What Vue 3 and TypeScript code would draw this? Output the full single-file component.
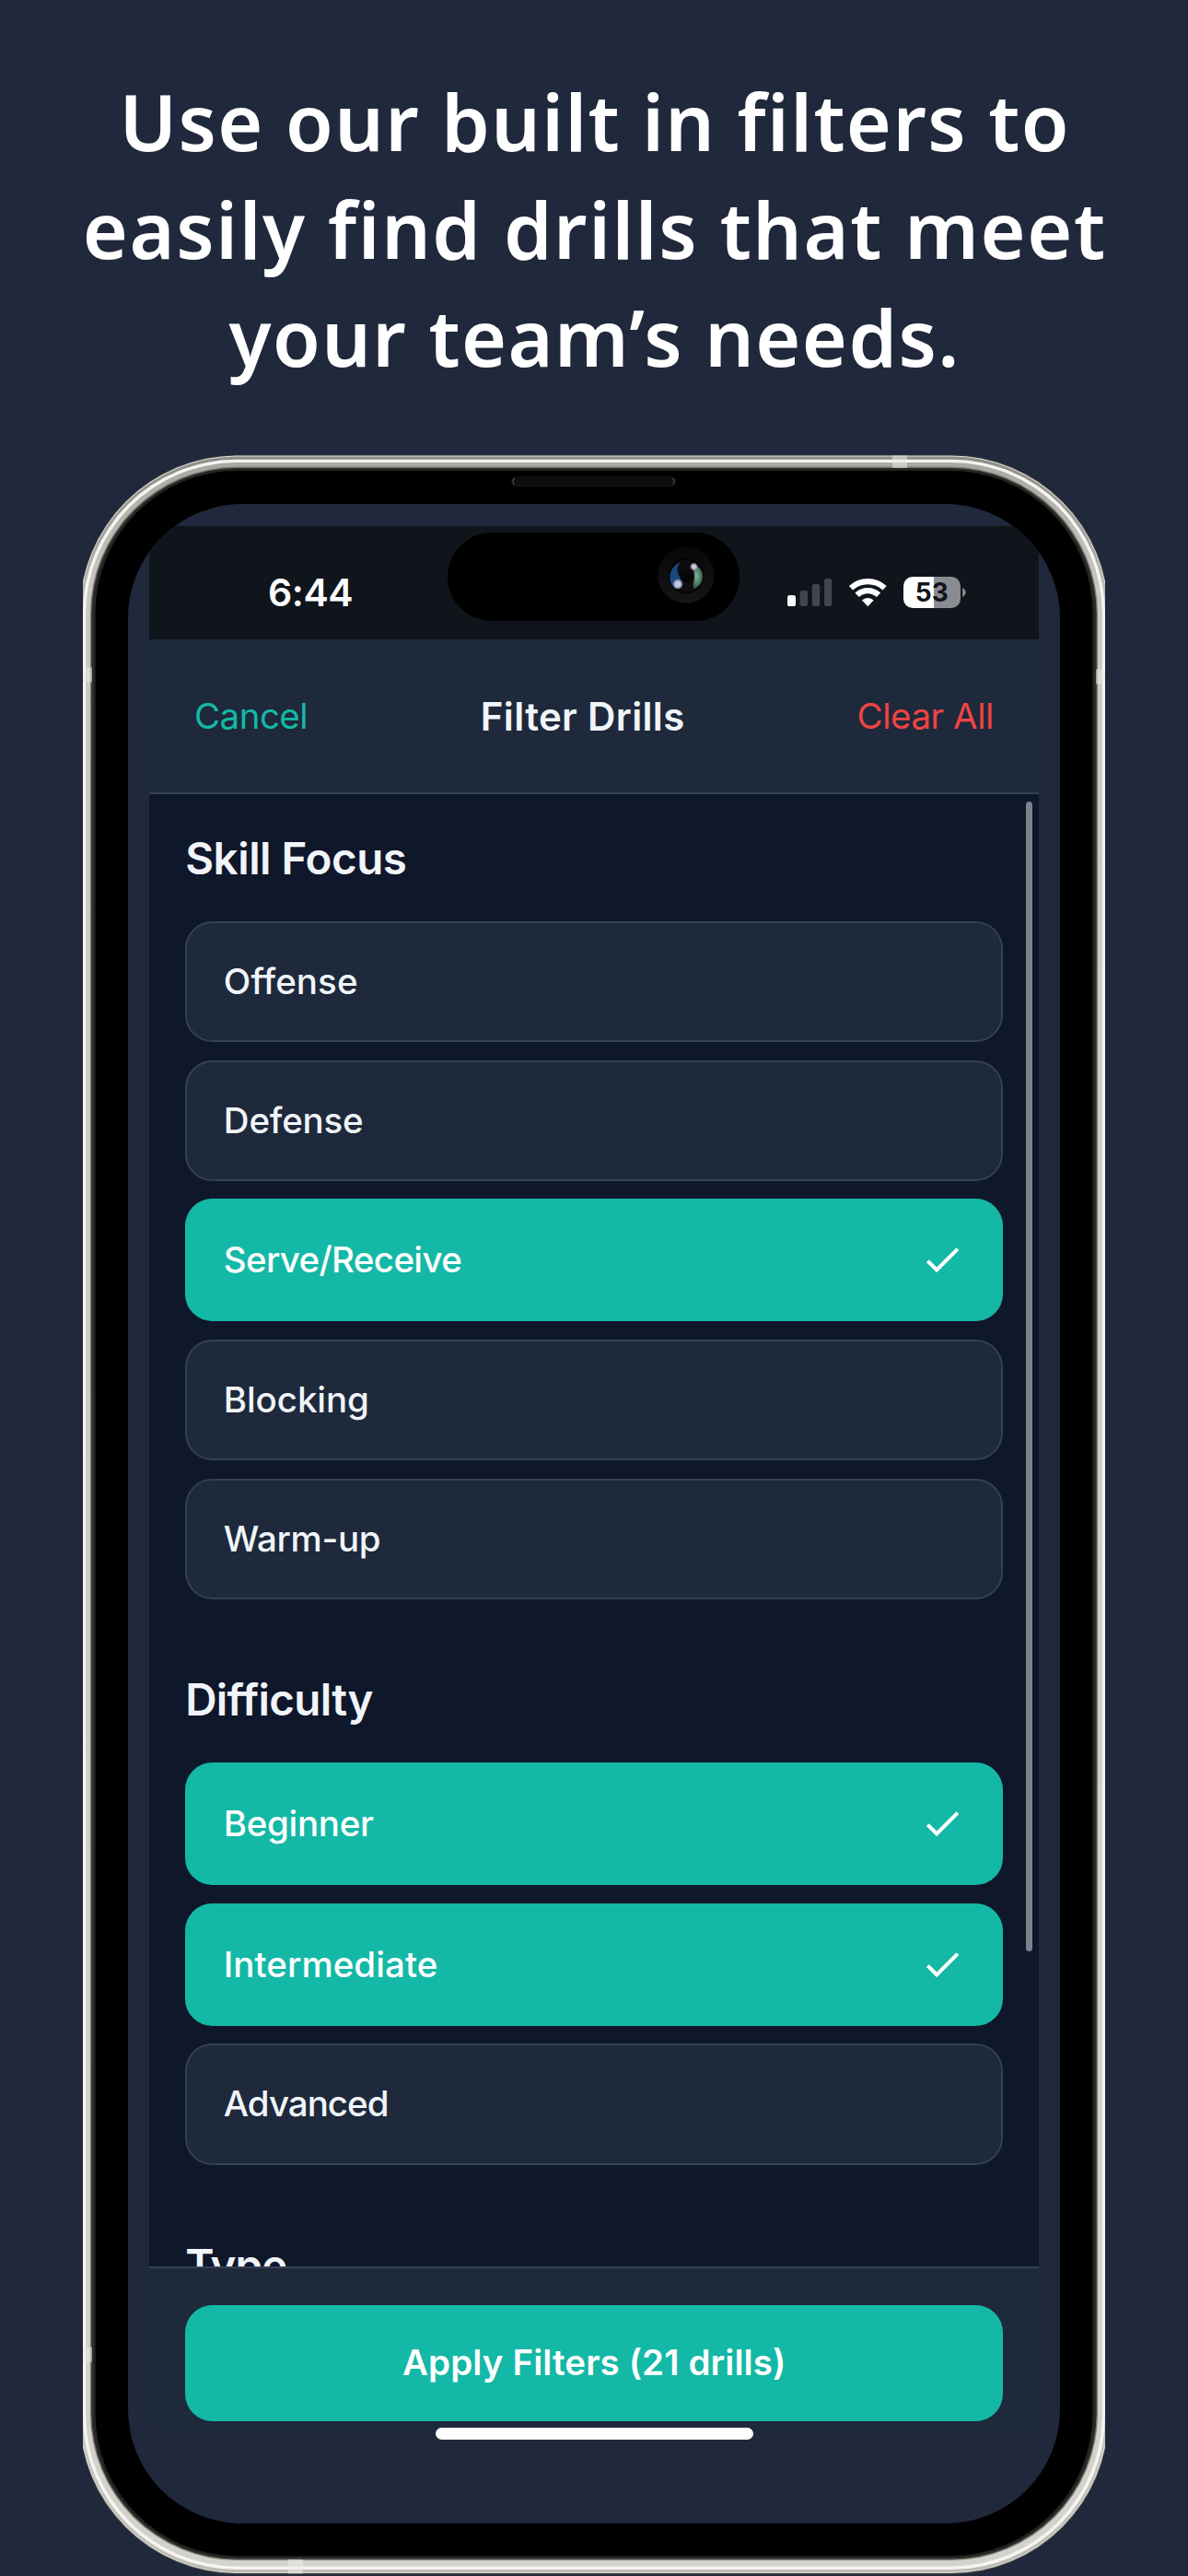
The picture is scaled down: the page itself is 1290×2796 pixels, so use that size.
<script setup lang="ts">
interface Option {
  label: string
  width: number
  selected?: boolean
}

interface Section {
  title: string
  width: number
  options: Option[]
}

const UI = '"Inter"'
const DISPLAY = '"Noto Sans"'

const headline = [
  { text: 'Use our built in filters to', width: 1020.5 },
  { text: 'easily find drills that meet', width: 1104.5 },
  { text: 'your team’s needs.', width: 789 },
]

const sections: Section[] = [
  {
    title: 'Skill Focus',
    width: 237.7,
    options: [
      { label: 'Offense', width: 142.2 },
      { label: 'Defense', width: 147.4 },
      { label: 'Serve/Receive', width: 256.5, selected: true },
      { label: 'Blocking', width: 153.3 },
      { label: 'Warm-up', width: 169 },
    ],
  },
  {
    title: 'Difficulty',
    width: 201.3,
    options: [
      { label: 'Beginner', width: 160.3, selected: true },
      { label: 'Intermediate', width: 228, selected: true },
      { label: 'Advanced', width: 178 },
    ],
  },
  { title: 'Type', width: 109, options: [] },
]

const ctx = document.createElement('canvas').getContext('2d')!

// Letter-spacing that makes a label span the given ink width.
function fit(text: string, weight: number, size: number, family: string, width: number) {
  ctx.font = `${weight} ${size}px ${family}`
  ctx.letterSpacing = '0.01px'
  const m = ctx.measureText(text)
  const ink = m.actualBoundingBoxRight + m.actualBoundingBoxLeft
  const gap = (width - ink) / (text.length - 1)
  return { letterSpacing: `${gap.toFixed(3)}px`, marginRight: `${(-gap).toFixed(3)}px` }
}
</script>

<template>
  <main class="page">
    <h1 class="headline">
      <span v-for="line in headline" :key="line.text" class="line">
        <span :style="fit(line.text, 600, 84, DISPLAY, line.width)">{{ line.text }}</span>
      </span>
    </h1>

    <section class="phone">
      <svg class="frame" viewBox="0 0 1110 2303" width="1110" height="2303" aria-hidden="true">
        <defs>
          <linearGradient id="edge" x1="0" y1="0" x2="0" y2="1">
            <stop offset="0" stop-color="#8d8e87" />
            <stop offset="0.04" stop-color="#a5a29f" />
            <stop offset="0.09" stop-color="#d9d8d2" />
            <stop offset="0.9" stop-color="#cfcec7" />
            <stop offset="1" stop-color="#bdbcb5" />
          </linearGradient>
          <linearGradient id="band" x1="0" y1="0" x2="0" y2="1">
            <stop offset="0" stop-color="#a9a9a3" />
            <stop offset="0.06" stop-color="#c9c8c1" />
            <stop offset="1" stop-color="#d3d2cb" />
          </linearGradient>
        </defs>
        <rect x="-4.5" y="0.5" width="1119" height="2301" rx="172" fill="#34363a" />
        <rect x="-3.5" y="1.5" width="1117" height="2298.5" rx="171" fill="#e0e0dc" />
        <rect x="-2.7" y="2.5" width="1115.4" height="2296.7" rx="170" fill="url(#edge)" />
        <rect x="0" y="5.7" width="1110" height="2290.3" rx="167" fill="#f5f4f2" />
        <rect x="3.2" y="9" width="1103.6" height="2283.5" rx="164" fill="url(#band)" />
        <rect x="8" y="13.6" width="1094" height="2272.4" rx="159.5" fill="#77766f" />
        <rect x="9.4" y="15" width="1091.2" height="2269.5" rx="158" fill="#2b2b29" />
        <rect x="12" y="16.5" width="1086" height="2266.5" rx="156" fill="#111" />
        <rect x="12.8" y="17.2" width="1084.4" height="2265" rx="155" fill="none" stroke="#2c2c2c" stroke-width="1" />
        <rect x="14" y="18" width="1082" height="2263" rx="154" fill="#000" />
        <g fill="#e9ebe5" fill-opacity="0.55">
          <rect x="879" y="1.5" width="16" height="13.5" />
          <rect x="0" y="231.5" width="10" height="16" />
          <rect x="1100" y="233.5" width="10" height="16" />
          <rect x="0" y="2054.7" width="10" height="16" />
          <rect x="223" y="2285" width="16" height="15.5" />
        </g>
        <rect x="465.5" y="24.8" width="178" height="9.6" rx="4.8" fill="#0d0d0d" stroke="#161616" />
        <path d="M468.5 26q-3 3.5 0 7M640.5 26q3 3.5 0 7" fill="none" stroke="#4b4b4b" stroke-width="1.2" />
      </svg>

      <div class="glass">
        <div class="app">
          <div class="status">
            <span class="time" :style="fit('6:44', 600, 41, UI, 89.4)">6:44</span>
            <div class="island">
              <svg viewBox="0 0 62 62" width="62" height="62" aria-hidden="true">
                <defs>
                  <radialGradient id="green" cx="0.5" cy="0.5" r="0.6">
                    <stop offset="0" stop-color="#84b598" />
                    <stop offset="1" stop-color="#1f4435" />
                  </radialGradient>
                  <radialGradient id="glint">
                    <stop offset="0.45" stop-color="#cfc6df" />
                    <stop offset="1" stop-color="#cfc6df" stop-opacity="0" />
                  </radialGradient>
                  <linearGradient id="ring" x1="0" y1="0" x2="0" y2="1">
                    <stop offset="0" stop-color="#070707" />
                    <stop offset="1" stop-color="#161616" />
                  </linearGradient>
                </defs>
                <circle cx="31" cy="31" r="30.7" fill="url(#ring)" />
                <circle cx="31" cy="32.3" r="19" fill="#020203" />
                <circle cx="31" cy="32.3" r="17.5" fill="#0f0c10" />
                <path d="M25 17C11 23 10 40 20 46c7 1 9-5 4.500-12-4-6-4-12 .5-17z" fill="#17497f" />
                <path d="M38 19c14 4 15 21 2 27-3-3 0-8 0-13s-1-8-4-11z" fill="url(#green)" />
                <circle cx="31" cy="32" r="7" fill="#070608" />
                <circle cx="22" cy="41" r="6" fill="url(#glint)" />
                <circle cx="39.5" cy="22" r="4.500" fill="url(#glint)" />
              </svg>
            </div>
            <svg class="indicators" viewBox="0 0 194 34" width="194" height="34" aria-hidden="true">
              <rect x="0" y="20" width="9" height="12" rx="2.6" fill="#fff" />
              <g fill="#41454c">
                <rect x="13.6" y="15" width="8.4" height="17" rx="2.6" />
                <rect x="26.8" y="8" width="8.4" height="24" rx="2.6" />
                <rect x="40" y="2" width="8.2" height="30" rx="2.6" />
              </g>
              <g fill="none" stroke="#fff" stroke-width="6.2">
                <path d="M69 12.2a27.1 27.1 0 0 1 36.6 0" />
                <path d="M75.6 19.7a17 17 0 0 1 23.4 0" />
              </g>
              <path d="M87.3 32.2 80.9 25.6a9.4 9.4 0 0 1 12.8 0z" fill="#fff" />
              <path d="M136 0H159V34H136a10 10 0 0 1-10-10V10a10 10 0 0 1 10-10z" fill="#fff" />
              <path d="M159 0H178a10 10 0 0 1 10 10V24a10 10 0 0 1-10 10H159z" fill="#8b8c91" />
              <path d="M190.2 12q3.4 2 3.4 5t-3.4 5z" fill="#8b8c91" />
              <text x="156.8" y="27" text-anchor="middle" class="charge">53</text>
            </svg>
          </div>

          <header class="bar">
            <span class="cancel" :style="fit('Cancel', 400, 38.5, UI, 119.3)">Cancel</span>
            <h2 class="title" :style="fit('Filter Drills', 600, 42, UI, 217.5)">Filter Drills</h2>
            <span class="clear" :style="fit('Clear All', 400, 38.5, UI, 144.7)">Clear All</span>
          </header>

          <div class="list">
            <div v-for="section in sections" :key="section.title" class="section">
              <h3 class="heading">
                <span :style="fit(section.title, 600, 47.5, UI, section.width)">{{ section.title }}</span>
              </h3>
              <div class="options">
                <div
                  v-for="option in section.options"
                  :key="option.label"
                  class="option"
                  :class="{ selected: option.selected }"
                >
                  <span :style="fit(option.label, 500, 38.5, UI, option.width)">{{ option.label }}</span>
                  <svg v-if="option.selected" viewBox="0 0 24 24" width="48.4" height="48.4" aria-hidden="true">
                    <path fill="#fff" d="M9 16.17 4.83 12l-1.42 1.41L9 19 21 7l-1.41-1.41z" />
                  </svg>
                </div>
              </div>
            </div>
            <i class="scrollbar"></i>
          </div>

          <footer class="footer">
            <div class="apply">
              <span :style="fit('Apply Filters (21 drills)', 600, 38.5, UI, 413.3)">Apply Filters (21 drills)</span>
            </div>
            <i class="home"></i>
          </footer>
        </div>
      </div>
    </section>
  </main>
</template>

<style>
body {
  margin: 0;
  background: #20283b;
}
</style>

<style scoped>
.page {
  display: flex;
  flex-direction: column;
  width: 1290px;
  height: 2796px;
  overflow: hidden;
  background: #20283b;
  color: #f1f5f9;
  font-family: "Inter", sans-serif;
  font-variant-ligatures: none;
  white-space: nowrap;
}

.headline {
  flex: none;
  margin: 0;
  padding-top: 73px;
  color: #fff;
  font-family: "Noto Sans", sans-serif;
  font-size: 84px;
  font-weight: 600;
  line-height: 117px;
}

.line {
  display: flex;
  justify-content: center;
  height: 117px;
}

.phone {
  position: relative;
  flex: none;
  box-sizing: border-box;
  width: 1110px;
  height: 2303px;
  margin: 69px 0 0 90px;
  padding: 54px 49px 0;
  overflow: hidden;
}

.frame {
  position: absolute;
  left: 0;
  top: 0;
}

.glass {
  position: relative;
  box-sizing: border-box;
  height: 2192px;
  padding: 24px 22.6px 0 23px;
  overflow: hidden;
  border-radius: 124px;
  background: #20283b;
}

.app {
  display: flex;
  flex-direction: column;
  height: 2100px;
}

.status {
  position: relative;
  display: flex;
  flex: none;
  box-sizing: border-box;
  align-items: center;
  justify-content: space-between;
  height: 123px;
  padding: 21px 79.6px 0 129px;
  background: #10151c;
}

.time {
  color: #fff;
  font-size: 41px;
  font-weight: 600;
}

.charge {
  fill: #10151c;
  font: 700 28px "Inter", sans-serif;
}

.island {
  position: absolute;
  left: 324.3px;
  top: 7px;
  display: flex;
  box-sizing: border-box;
  align-items: center;
  justify-content: flex-end;
  width: 316.7px;
  height: 95.5px;
  padding: 0 27px 4.5px 0;
  border-radius: 48px;
  background: #000;
}

.bar {
  display: flex;
  flex: none;
  box-sizing: border-box;
  align-items: center;
  justify-content: space-between;
  height: 168px;
  padding: 0 49px;
  border-bottom: 2px solid #334155;
  background: #1e293b;
  font-size: 38.5px;
}

.cancel {
  color: #14b8a6;
}

.clear {
  color: #ef4444;
}

.title {
  margin: 0;
  font-size: 42px;
  font-weight: 600;
}

.list {
  position: relative;
  display: flex;
  flex: none;
  flex-direction: column;
  gap: 79.2px;
  box-sizing: border-box;
  height: 1598px;
  padding: 39.5px 39.2px 0 39.2px;
  overflow: hidden;
  background: #0f172a;
}

.section {
  display: flex;
  flex: none;
  flex-direction: column;
  gap: 38.2px;
}

.heading {
  margin: 0;
  font-size: 47.5px;
  font-weight: 600;
  line-height: 60px;
}

.options {
  display: flex;
  flex-direction: column;
  gap: 19.6px;
}

.option {
  display: flex;
  box-sizing: border-box;
  align-items: center;
  justify-content: space-between;
  height: 131.3px;
  padding: 0 40px 1px 39.6px;
  border: 2px solid #334155;
  border-radius: 29.5px;
  background: #1e293b;
  font-size: 38.5px;
  font-weight: 500;
}

.option.selected {
  height: 132.8px;
  border-color: #14b8a6;
  background: #14b8a6;
  color: #fff;
}

.scrollbar {
  position: absolute;
  top: 7.5px;
  right: 7.5px;
  width: 7.3px;
  height: 1248.5px;
  border-radius: 4px;
  background: #7d808b;
}

.footer {
  display: flex;
  flex: none;
  flex-direction: column;
  align-items: center;
  box-sizing: border-box;
  height: 211px;
  padding: 39.5px 39.2px 0;
  border-top: 2px solid #334155;
  background: linear-gradient(#1e293b 80%, #20283b);
}

.apply {
  display: flex;
  flex: none;
  box-sizing: border-box;
  align-items: center;
  justify-content: center;
  align-self: stretch;
  height: 126.3px;
  padding-bottom: 1px;
  border-radius: 29.5px;
  background: #14b8a6;
  color: #fff;
  font-size: 38.5px;
  font-weight: 600;
}

.home {
  flex: none;
  width: 345px;
  height: 12.5px;
  margin-top: 7.3px;
  border-radius: 7px;
  background: #fff;
}
</style>
